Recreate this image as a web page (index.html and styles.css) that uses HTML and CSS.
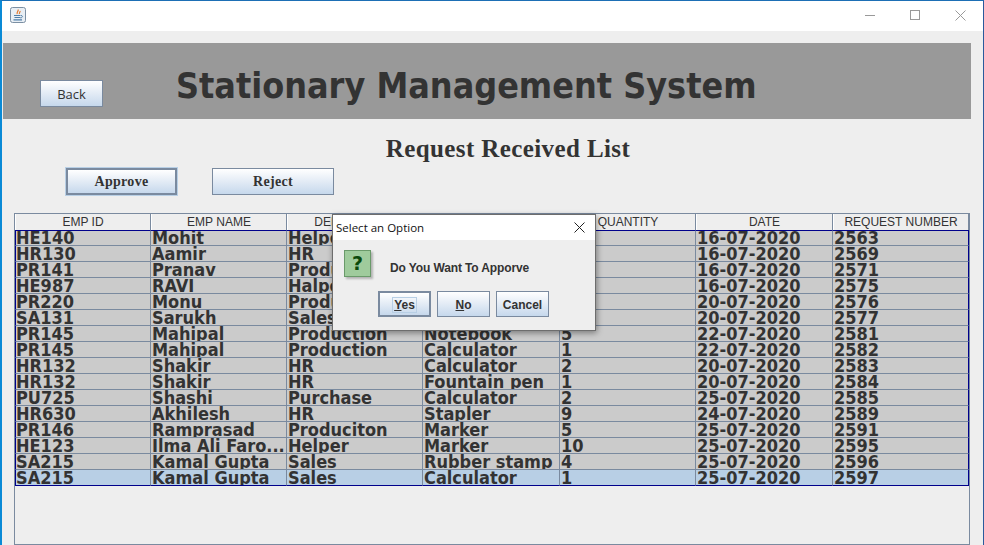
FILE: index.html
```html
<!DOCTYPE html>
<html>
<head>
<title>Stationary Management System</title>
<link rel="stylesheet" href="styles.css">
</head>
<body>

<div class="window">
  <div class="titlebar">
    <svg class="java-icon" width="16" height="16" viewBox="0 0 16 16">
      <rect x="0.5" y="0.5" width="15" height="15" rx="2" fill="#e8eef4" stroke="#7b8fa3"/>
      <path d="M8 2.500c1 1.500-1.500 2.500-.8 4.500M10 4c.5 1-1 1.500-.6 3" fill="none" stroke="#e2762a" stroke-width="1.200"/>
      <path d="M4 8.500h6.500M4.500 10.500h6M3.500 12.800h8.500" fill="none" stroke="#4f7ea8" stroke-width="1.200"/>
      <path d="M11 8.500c2 0 2 2-.5 2.500" fill="none" stroke="#4f7ea8"/>
    </svg>
    <div class="win-controls">
      <svg width="11" height="11" viewBox="0 0 11 11"><path d="M0 5.500h10" stroke="#999" fill="none"/></svg>
      <svg width="11" height="11" viewBox="0 0 11 11"><rect x="0.500" y="0.500" width="9" height="9" stroke="#999" fill="none"/></svg>
      <svg width="11" height="11" viewBox="0 0 11 11"><path d="M0.500 0.500l10 10M10.500 0.500l-10 10" stroke="#999" fill="none"/></svg>
    </div>
  </div>

  <div class="content">
    <div class="banner">
      <button class="btn back-btn">Back</button>
      <h1>Stationary Management System</h1>
    </div>

    <h2>Request Received List</h2>

    <div class="actions">
      <button class="btn serif-btn focused">Approve</button>
      <button class="btn serif-btn">Reject</button>
    </div>

    <div class="table-wrap">
      <table>
        <thead>
          <tr>
            <th>EMP ID</th>
            <th>EMP NAME</th>
            <th>DEPARTMENT</th>
            <th>ITEM NAME</th>
            <th>QUANTITY</th>
            <th>DATE</th>
            <th>REQUEST NUMBER</th>
          </tr>
        </thead>
        <tbody>
          <tr><td>HE140</td><td>Mohit</td><td>Helper</td><td></td><td></td><td>16-07-2020</td><td>2563</td></tr>
          <tr><td>HR130</td><td>Aamir</td><td>HR</td><td></td><td></td><td>16-07-2020</td><td>2569</td></tr>
          <tr><td>PR141</td><td>Pranav</td><td>Production</td><td></td><td></td><td>16-07-2020</td><td>2571</td></tr>
          <tr><td>HE987</td><td>RAVI</td><td>Halper</td><td></td><td></td><td>16-07-2020</td><td>2575</td></tr>
          <tr><td>PR220</td><td>Monu</td><td>Production</td><td></td><td></td><td>20-07-2020</td><td>2576</td></tr>
          <tr><td>SA131</td><td>Sarukh</td><td>Sales</td><td></td><td></td><td>20-07-2020</td><td>2577</td></tr>
          <tr><td>PR145</td><td>Mahipal</td><td>Production</td><td>Notebook</td><td>5</td><td>22-07-2020</td><td>2581</td></tr>
          <tr><td>PR145</td><td>Mahipal</td><td>Production</td><td>Calculator</td><td>1</td><td>22-07-2020</td><td>2582</td></tr>
          <tr><td>HR132</td><td>Shakir</td><td>HR</td><td>Calculator</td><td>2</td><td>20-07-2020</td><td>2583</td></tr>
          <tr><td>HR132</td><td>Shakir</td><td>HR</td><td>Fountain pen</td><td>1</td><td>20-07-2020</td><td>2584</td></tr>
          <tr><td>PU725</td><td>Shashi</td><td>Purchase</td><td>Calculator</td><td>2</td><td>25-07-2020</td><td>2585</td></tr>
          <tr><td>HR630</td><td>Akhilesh</td><td>HR</td><td>Stapler</td><td>9</td><td>24-07-2020</td><td>2589</td></tr>
          <tr><td>PR146</td><td>Ramprasad</td><td>Produciton</td><td>Marker</td><td>5</td><td>25-07-2020</td><td>2591</td></tr>
          <tr><td>HE123</td><td>Ilma Ali Faro...</td><td>Helper</td><td>Marker</td><td>10</td><td>25-07-2020</td><td>2595</td></tr>
          <tr><td>SA215</td><td>Kamal Gupta</td><td>Sales</td><td>Rubber stamp</td><td>4</td><td>25-07-2020</td><td>2596</td></tr>
          <tr class="selected"><td>SA215</td><td>Kamal Gupta</td><td>Sales</td><td>Calculator</td><td>1</td><td>25-07-2020</td><td>2597</td></tr>
        </tbody>
      </table>
    </div>
  </div>

  <div class="dialog">
    <div class="dialog-title">
      <span>Select an Option</span>
      <svg width="11" height="11" viewBox="0 0 11 11"><path d="M0.500 0.500l10 10M10.500 0.500l-10 10" stroke="#222" fill="none"/></svg>
    </div>
    <div class="dialog-body">
      <div class="dialog-msg">
        <div class="question">?</div>
        <p>Do You Want To Apporve</p>
      </div>
      <div class="dialog-btns">
        <button class="btn dlg-btn default"><span class="focus-box"><u>Y</u>es</span></button>
        <button class="btn dlg-btn"><u>N</u>o</button>
        <button class="btn dlg-btn">Cancel</button>
      </div>
    </div>
  </div>
</div>

</body>
</html>
```
FILE: styles.css
```css
html,
body {
  margin: 0;
  height: 100%;
  overflow: hidden;
}

.window {
  position: relative;
  width: 984px;
  height: 545px;
  box-sizing: border-box;
  border-top: 1px solid #1d6fb5;
  border-left: 2px solid #0a8ad6;
  border-right: 1px solid #2a5a9c;
  background-color: #eeeeee;
  font-family: "Liberation Sans", sans-serif;
  color: #333;
}

.titlebar {
  height: 30px;
  background-color: #fff;
  display: flex;
  align-items: center;
  justify-content: space-between;
  padding: 0 0 2px 8px;
  box-sizing: border-box;
}

.java-icon {
  display: block;
}

.win-controls {
  display: flex;
  gap: 34px;
  padding-right: 17px;
}

.win-controls svg {
  display: block;
}

.content {
  padding: 12px 0 0 1px;
}

.banner {
  height: 76px;
  width: 968px;
  background-color: #999;
  display: flex;
  align-items: flex-start;
  box-sizing: border-box;
  padding: 0 0 0 37px;
}

.btn {
  background: linear-gradient(to bottom, #ffffff 0%, #eef3f9 30%, #c6d8ec 100%);
  border: 1px solid #7a8a9f;
  padding: 0;
  color: #333;
  font-family: "Liberation Sans", sans-serif;
}

.back-btn {
  width: 63px;
  height: 27px;
  margin-top: 37px;
  font-family: "Open Sans", sans-serif;
  font-size: 13px;
}

h1 {
  margin: 20px 0 0 73px;
  font-family: "DejaVu Sans Condensed", "DejaVu Sans", sans-serif;
  font-stretch: condensed;
  font-size: 35.600px;
  line-height: 46px;
  font-weight: bold;
  color: #333;
  white-space: nowrap;
}

h2 {
  margin: 16px 0 0 0;
  width: 1010px;
  text-align: center;
  font-family: "Liberation Serif", serif;
  font-size: 25px;
  letter-spacing: 0.4px;
  line-height: 28px;
  font-weight: bold;
  color: #333;
}

.actions {
  display: flex;
  gap: 35px;
  padding: 5px 0 0 63px;
}

.serif-btn {
  width: 122px;
  height: 27px;
  font-family: "Liberation Serif", serif;
  font-weight: bold;
  font-size: 14px;
  letter-spacing: 0.3px;
}

.serif-btn.focused {
  width: 111px;
  border: 2px solid #7a8a9f;
  outline: 1px solid #b8cfe5;
}

.table-wrap {
  margin: 18px 0 0 11px;
  width: 956px;
  height: 332px;
  box-sizing: border-box;
  border: 1px solid #7a8a9f;
}

table {
  border-collapse: separate;
  border-spacing: 0;
  table-layout: fixed;
  width: 954px;
  font-family: "DejaVu Sans Condensed", "DejaVu Sans", sans-serif;
  font-stretch: condensed;
}

th,
td {
  box-sizing: border-box;
  width: 136px;
  overflow: hidden;
  white-space: nowrap;
}

th:nth-child(4),
th:nth-child(6) {
  width: 137px;
}

th {
  height: 16px;
  padding: 1px 0 0 0;
  background-color: #eeeeee;
  border-right: 1px solid #7a8a9f;
  border-left: 1px solid #fff;
  font-family: "Liberation Sans", sans-serif;
  font-size: 12px;
  line-height: 15px;
  font-weight: normal;
  color: #333;
  text-align: center;
}

td {
  padding: 1px 0 0 1px;
  background-color: #cbcbcb;
  border-top: 1px solid #7a8a9f;
  border-right: 1px solid #7a8a9f;
  font-size: 18px;
  font-weight: bold;
  line-height: 14px;
  color: #333;
  vertical-align: top;
}

td:first-child {
  padding-left: 0;
  border-left: 1px solid #00008b;
}

td:last-child {
  border-right: 1px solid #00008b;
}

tbody tr:first-child td {
  padding-top: 0;
  border-top-color: #00008b;
}

tbody tr:last-child td {
  border-bottom: 1px solid #00008b;
}

.selected td {
  background-color: #b8cfe5;
}

.dialog {
  position: absolute;
  left: 330px;
  top: 213px;
  width: 264px;
  height: 117px;
  box-sizing: border-box;
  border: 1px solid #6d6d6d;
  box-shadow: 1px 2px 6px rgba(0, 0, 0, 0.4);
  background-color: #eeeeee;
}

.dialog-title {
  height: 25px;
  background-color: #fff;
  display: flex;
  align-items: center;
  justify-content: space-between;
  padding: 0 10px 0 3px;
  font-family: "Open Sans", sans-serif;
  font-size: 11.500px;
  color: #111;
}

.dialog-msg {
  display: flex;
  align-items: center;
  padding: 10px 0 0 11px;
}

.question {
  width: 27px;
  height: 27px;
  box-sizing: border-box;
  border: 1px solid #6a9a6a;
  background-color: #9fcb9c;
  box-shadow: 2px 2px 2px rgba(0, 0, 0, 0.25);
  color: #0b4a0b;
  font-family: "DejaVu Sans", sans-serif;
  font-size: 19px;
  font-weight: bold;
  line-height: 25px;
  text-align: center;
}

.dialog-msg p {
  margin: 8px 0 0 19px;
  font-size: 12px;
  letter-spacing: -0.120px;
  font-weight: bold;
  color: #333;
}

.dialog-btns {
  display: flex;
  gap: 6px;
  padding: 14px 0 0 45px;
}

.dlg-btn {
  width: 53px;
  height: 26px;
  padding-top: 1px;
  font-size: 12px;
  font-weight: bold;
}

.dlg-btn.default {
  border: 2px solid #7a8a9f;
}

.focus-box {
  border: 1px solid #b8cfe5;
  padding: 0 1px;
}
```
